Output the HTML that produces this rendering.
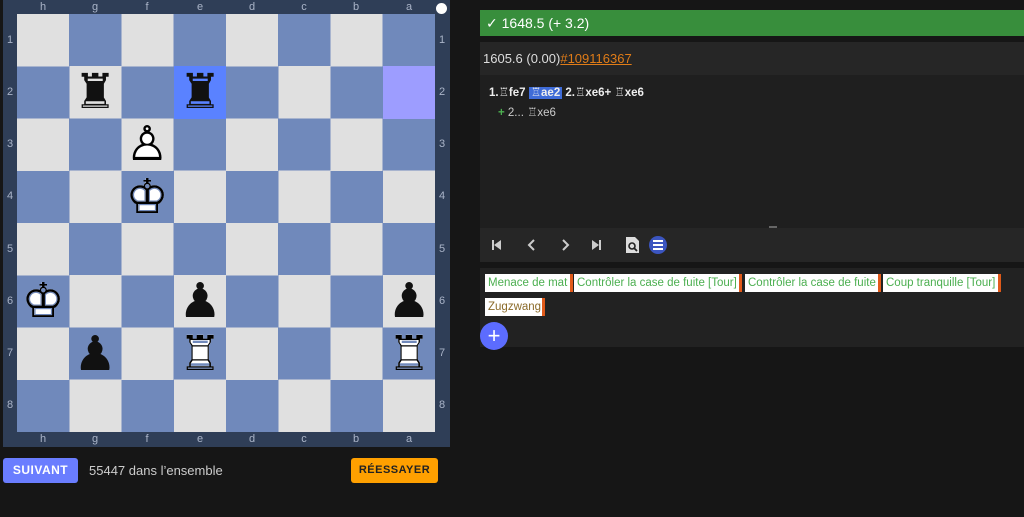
<!DOCTYPE html>
<html><head><meta charset="utf-8"><style>
body{margin:0;width:1024px;height:517px;background:#161616;font-family:"Liberation Sans","DejaVu Sans",sans-serif;position:relative;overflow:hidden}
.frame{position:absolute;left:3px;top:0;width:447px;height:447px;background:#2f3e57}
.board{position:absolute;left:17px;top:14px;width:418px;height:418px;background:repeating-conic-gradient(#7089bb 0 25%,#e0e0e0 0 50%) 0 0/104.5px 104.5px}
.sq{position:absolute;width:52.25px;height:52.25px}
.pc{position:absolute;width:52.25px;height:52.25px;font-family:"DejaVu Sans",sans-serif;font-size:48px;line-height:52px;text-align:center;color:#111}
.pc.w{color:#fff}
.pc .o{position:absolute;left:0;top:0;width:100%;color:#000}
.coord{position:absolute;color:#aab4c8;font-size:11px;text-align:center;width:52px}
.rk{position:absolute;color:#aab4c8;font-size:11px;width:14px;text-align:center}
</style></head><body>
<div class="frame"></div>
<div class="board"></div>
<div class="sq" style="left:173.75px;top:66.25px;background:#5a82ff"></div>
<div class="sq" style="left:382.75px;top:66.25px;background:#9d9dff"></div>
<div class="coord" style="left:17px;top:1px">h</div><div class="coord" style="left:69px;top:1px">g</div><div class="coord" style="left:121px;top:1px">f</div><div class="coord" style="left:174px;top:1px">e</div><div class="coord" style="left:226px;top:1px">d</div><div class="coord" style="left:278px;top:1px">c</div><div class="coord" style="left:330px;top:1px">b</div><div class="coord" style="left:383px;top:1px">a</div>
<div class="coord" style="left:17px;top:433px">h</div><div class="coord" style="left:69px;top:433px">g</div><div class="coord" style="left:121px;top:433px">f</div><div class="coord" style="left:174px;top:433px">e</div><div class="coord" style="left:226px;top:433px">d</div><div class="coord" style="left:278px;top:433px">c</div><div class="coord" style="left:330px;top:433px">b</div><div class="coord" style="left:383px;top:433px">a</div>
<div style="position:absolute;left:436px;top:3px;width:11px;height:11px;border-radius:50%;background:#fff"></div>
<div class="rk" style="left:3px;top:34px">1</div><div class="rk" style="left:3px;top:86px">2</div><div class="rk" style="left:3px;top:138px">3</div><div class="rk" style="left:3px;top:190px">4</div><div class="rk" style="left:3px;top:243px">5</div><div class="rk" style="left:3px;top:295px">6</div><div class="rk" style="left:3px;top:347px">7</div><div class="rk" style="left:3px;top:399px">8</div>
<div class="rk" style="left:435px;top:34px">1</div><div class="rk" style="left:435px;top:86px">2</div><div class="rk" style="left:435px;top:138px">3</div><div class="rk" style="left:435px;top:190px">4</div><div class="rk" style="left:435px;top:243px">5</div><div class="rk" style="left:435px;top:295px">6</div><div class="rk" style="left:435px;top:347px">7</div><div class="rk" style="left:435px;top:399px">8</div>
<div class="pc" style="left:69px;top:66px">♜</div>
<div class="pc" style="left:174px;top:66px">♜</div>
<div class="pc w" style="left:121px;top:118px">♟<span class="o">♙</span></div>
<div class="pc w" style="left:121px;top:171px">♚<span class="o">♔</span></div>
<div class="pc w" style="left:17px;top:275px">♚<span class="o">♔</span></div>
<div class="pc" style="left:174px;top:275px">♟</div>
<div class="pc" style="left:383px;top:275px">♟</div>
<div class="pc" style="left:69px;top:328px">♟</div>
<div class="pc w" style="left:174px;top:328px">♜<span class="o">♖</span></div>
<div class="pc w" style="left:383px;top:328px">♜<span class="o">♖</span></div>
<div style="position:absolute;left:3px;top:458px;width:75px;height:25px;background:#6a7dff;border-radius:3px;color:#fff;font-weight:bold;font-size:12px;letter-spacing:.5px;line-height:25px;text-align:center">SUIVANT</div>
<div style="position:absolute;left:89px;top:463px;color:#ccc;font-size:13px">55447 dans l’ensemble</div>
<div style="position:absolute;left:351px;top:458px;width:87px;height:25px;background:#ffa000;border-radius:3px;color:#222;font-weight:bold;font-size:11px;letter-spacing:.5px;line-height:25px;text-align:center">RÉESSAYER</div>
<div style="position:absolute;left:480px;top:10px;width:544px;height:26px;background:#388e3c;color:#fff;font-size:14px;line-height:26px"><span style="margin-left:6px">✓</span> 1648.5 (+ 3.2)</div>
<div style="position:absolute;left:480px;top:42px;width:544px;height:33px;background:#262626;color:#ddd;font-size:13px;line-height:34px"><span style="margin-left:3px">1605.6 (0.00)</span><span style="color:#e07c18;text-decoration:underline">#109116367</span></div>
<div style="position:absolute;left:480px;top:75px;width:544px;height:153px;background:#1f1f1f"></div>
<div style="position:absolute;left:769px;top:226px;width:8px;height:3px;background:#666"></div>
<div style="position:absolute;left:489px;top:85px;color:#eee;font-size:11.5px;font-weight:bold">1.♖fe7 <span style="background:#3f6cd8;padding:0 2px">♖ae2</span> 2.♖xe6+ ♖xe6</div>
<div style="position:absolute;left:498px;top:105px;color:#ccc;font-size:11.5px"><span style="color:#4caf50;font-weight:bold">+</span> 2... ♖xe6</div>
<div style="position:absolute;left:480px;top:228px;width:544px;height:34px;background:#262626;color:#ccc">
<svg style="position:absolute;left:10px;top:11px" width="12" height="12" viewBox="0 0 12 12"><rect x="2" y="1" width="2" height="10" fill="#ccc"/><path d="M11 1 L4 6 L11 11Z" fill="#ccc"/></svg>
<svg style="position:absolute;left:46px;top:11px" width="12" height="12" viewBox="0 0 12 12"><path d="M8 1 L3 6 L8 11" stroke="#ccc" stroke-width="2" fill="none"/></svg>
<svg style="position:absolute;left:79px;top:11px" width="12" height="12" viewBox="0 0 12 12"><path d="M4 1 L9 6 L4 11" stroke="#ccc" stroke-width="2" fill="none"/></svg>
<svg style="position:absolute;left:111px;top:11px" width="12" height="12" viewBox="0 0 12 12"><path d="M1 1 L8 6 L1 11Z" fill="#ccc"/><rect x="8" y="1" width="2" height="10" fill="#ccc"/></svg>
<svg style="position:absolute;left:146px;top:9px" width="13" height="16" viewBox="0 0 13 16"><path d="M0 0 H9 L13 4 V16 H0Z" fill="#ddd"/><circle cx="6" cy="9" r="3" stroke="#222" stroke-width="1.6" fill="none"/><path d="M8 11 L11 14" stroke="#222" stroke-width="1.8"/></svg>
<span style="position:absolute;left:169px;top:8px;width:18px;height:18px;border-radius:50%;background:#3b55c0"></span>
<span style="position:absolute;left:173px;top:12px;width:10px;height:10px;border-top:2px solid #fff;border-bottom:2px solid #fff;box-sizing:border-box"></span>
<span style="position:absolute;left:173px;top:16px;width:10px;height:2px;background:#fff"></span>
</div>
<div style="position:absolute;left:480px;top:268px;width:544px;height:79px;background:#222"></div>
<div style="position:absolute;left:485px;top:274px;font-size:11.5px;color:#4caf50">
<span style="position:absolute;left:0;top:0;width:82px;height:18px;background:#fff;border-right:3px solid #e05a1a;line-height:18px;padding-left:3px;white-space:nowrap;overflow:hidden">Menace de mat</span>
<span style="position:absolute;left:89px;top:0;width:162px;height:18px;background:#fff;border-right:3px solid #e05a1a;line-height:18px;padding-left:3px;white-space:nowrap;overflow:hidden">Contrôler la case de fuite [Tour]</span>
<span style="position:absolute;left:260px;top:0;width:130px;height:18px;background:#fff;border-right:3px solid #e05a1a;line-height:18px;padding-left:3px;white-space:nowrap;overflow:hidden">Contrôler la case de fuite</span>
<span style="position:absolute;left:398px;top:0;width:112px;height:18px;background:#fff;border-right:3px solid #e05a1a;line-height:18px;padding-left:3px;white-space:nowrap;overflow:hidden">Coup tranquille [Tour]</span>
<span style="position:absolute;left:0;top:24px;width:54px;height:18px;background:#fff;border-right:3px solid #e05a1a;line-height:18px;padding-left:3px;color:#8b6b2a;white-space:nowrap;overflow:hidden">Zugzwang</span>
</div>
<div style="position:absolute;left:480px;top:322px;width:28px;height:28px;border-radius:50%;background:#5c6cff;color:#fff;font-size:22px;line-height:27px;text-align:center">+</div>
</body></html>
